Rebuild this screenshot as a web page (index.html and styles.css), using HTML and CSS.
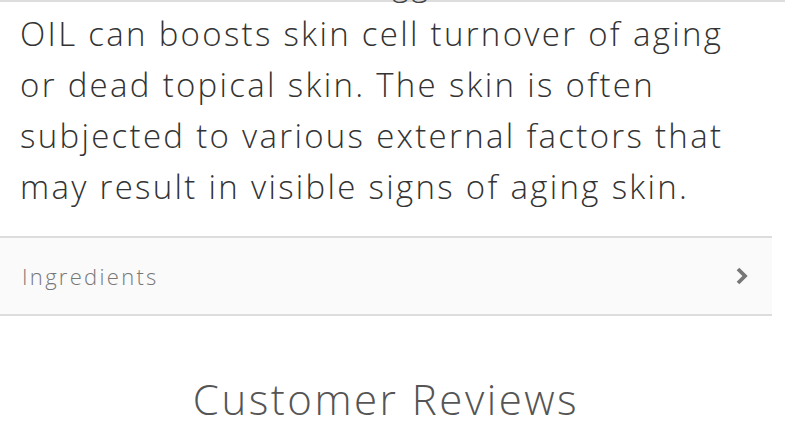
FILE: index.html
```html
<!DOCTYPE html>
<html lang="en">
<head>
    <meta charset="UTF-8">
    <meta name="viewport" content="width=device-width, initial-scale=1.0">
    <title>Product details</title>
    <link rel="stylesheet" href="styles.css">
</head>
<body>
    <div class="top-rule"></div>
    <div class="page">
        <div class="prev-text"><span>gg</span></div>
        <p class="description">OIL can boosts skin cell turnover of aging<br>or dead topical skin. The skin is often<br>subjected to various external factors that<br>may result in visible signs of aging skin.</p>
        <div class="accordion">
            <span class="accordion-title">Ingredients</span>
            <svg class="chevron" width="14" height="20" viewBox="0 0 14 20">
                <path d="M3 3 L10 10 L3 17" fill="none" stroke="#777" stroke-width="3.8"/>
            </svg>
        </div>
        <h2 class="reviews-title">Customer Reviews</h2>
    </div>
</body>
</html>
```

FILE: styles.css
```css
body {
    margin: 0;
    background-color: #fff;
    font-family: "Open Sans", Lato, sans-serif;
    overflow: hidden;
}
.top-rule {
    width: 785px;
    height: 2px;
    background-color: #ddd;
}
.page {
    width: 772px;
}
.prev-text {
    height: 0;
    overflow: visible;
    position: relative;
}
.prev-text span {
    position: absolute;
    left: 392px;
    top: -42px;
    font-size: 33px;
    letter-spacing: 2px;
    color: #444;
    font-weight: 300;
}
.description {
    margin: 0;
    padding: 6px 0 0 20px;
    font-size: 33px;
    line-height: 51px;
    font-weight: 300;
    letter-spacing: 2.3px;
    color: #333;
    height: 226px;
    box-sizing: border-box;
    white-space: nowrap;
}
.accordion {
    display: flex;
    align-items: center;
    justify-content: space-between;
    height: 76px;
    padding: 0 23px 0 22px;
    background-color: #fafafa;
    border-top: 2px solid #ddd;
    border-bottom: 2px solid #ddd;
    margin-top: 8px;
}
.accordion-title {
    font-size: 22px;
    font-weight: 300;
    letter-spacing: 2.3px;
    color: #777;
}
.chevron {
    display: block;
}
.reviews-title {
    margin: 54px 0 0 0;
    text-align: center;
    font-size: 42px;
    font-weight: 300;
    letter-spacing: 2.5px;
    color: #555;
}
```
